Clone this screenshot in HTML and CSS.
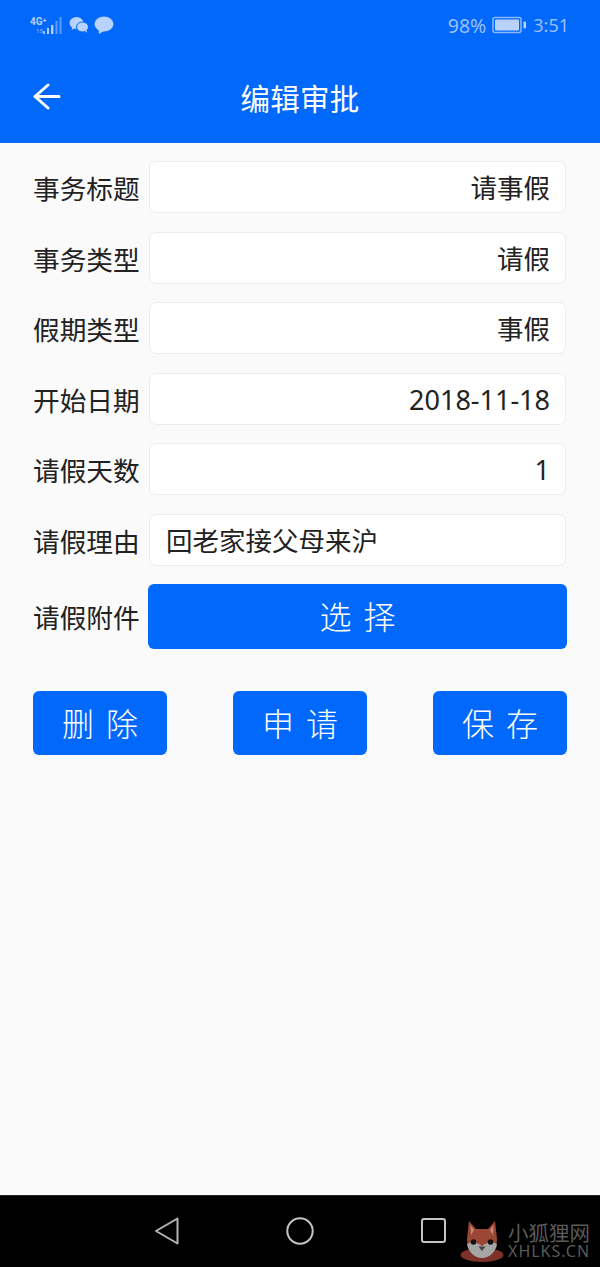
FILE: index.html
```html
<!DOCTYPE html>
<html lang="zh">
<head>
<meta charset="utf-8">
<title>编辑审批</title>
<link rel="stylesheet" href="styles.css">
</head>
<body>
<div class="screen">
  <header class="header">
    <div class="status">
      <div class="status-left">
        <svg class="signal" width="34" height="22" viewBox="0 0 34 22">
          <text x="0" y="10.500" class="net">4G⁺</text>
          <text x="6" y="19" class="net small">15</text>
          <rect x="13" y="17" width="2" height="3" fill="#9dc0fb"/>
          <rect x="17" y="14" width="2" height="6" fill="#b4cffc"/>
          <rect x="21" y="11" width="2.400" height="9" fill="#b4cffc"/>
          <rect x="25.500" y="7" width="2" height="13" fill="#5f9bfa"/>
          <rect x="29.500" y="3" width="2" height="17" fill="#5f9bfa"/>
        </svg>
        <svg width="20" height="18" viewBox="0 0 20 18">
          <ellipse cx="7.500" cy="7" rx="7" ry="6" fill="#b9d2fc"/>
          <path d="M3.500 11l-1 3 3.500-2z" fill="#b9d2fc"/>
          <ellipse cx="13.500" cy="11" rx="6" ry="5" fill="#b9d2fc" stroke="#0068fb" stroke-width="1"/>
          <path d="M16 15l2 2-.5-3z" fill="#b9d2fc"/>
        </svg>
        <svg width="20" height="18" viewBox="0 0 20 18">
          <ellipse cx="10" cy="8" rx="9.500" ry="7.500" fill="#b9d2fc"/>
          <path d="M4.500 13l.5 5 5-3z" fill="#b9d2fc"/>
        </svg>
      </div>
      <div class="status-right">
        <span class="pct">98%</span>
        <svg width="35" height="18" viewBox="0 0 35 18">
          <rect x="1" y="1.500" width="28" height="15" rx="2" fill="none" stroke="#8db6fa" stroke-width="1.500"/>
          <rect x="3" y="3.500" width="24" height="11" rx="1" fill="#b9d2fc"/>
          <rect x="31.500" y="5.500" width="2.500" height="7" rx="1" fill="#b9d2fc"/>
        </svg>
        <span>3:51</span>
      </div>
    </div>
    <div class="titlebar">
      <svg class="back" width="30" height="30" viewBox="0 0 30 30">
        <path d="M2 14.500H26M15 3L2 14.500L15 26" fill="none" stroke="#fff" stroke-width="3" stroke-linecap="round" stroke-linejoin="round"/>
      </svg>
      <h1 class="title">编辑审批</h1>
    </div>
  </header>

  <main class="content">
    <div class="form">
      <div class="row"><span class="label">事务标题</span><div class="field">请事假</div></div>
      <div class="row"><span class="label">事务类型</span><div class="field">请假</div></div>
      <div class="row"><span class="label">假期类型</span><div class="field">事假</div></div>
      <div class="row"><span class="label">开始日期</span><div class="field field-num">2018-11-18</div></div>
      <div class="row"><span class="label">请假天数</span><div class="field field-num">1</div></div>
      <div class="row"><span class="label">请假理由</span><div class="field field-left">回老家接父母来沪</div></div>
      <div class="row row-select"><span class="label">请假附件</span><button class="btn btn-select">选 择</button></div>
    </div>
    <div class="actions">
      <button class="btn btn-action">删 除</button>
      <button class="btn btn-action">申 请</button>
      <button class="btn btn-action">保 存</button>
    </div>
  </main>

  <footer class="navbar">
    <svg class="nav-back" width="26" height="30" viewBox="0 0 26 30">
      <path d="M23.500 2.500V27.500L2 15z" fill="none" stroke="#b5b5b5" stroke-width="2" stroke-linejoin="round"/>
    </svg>
    <svg class="nav-home" width="28" height="28" viewBox="0 0 28 28">
      <circle cx="14" cy="14" r="12.700" fill="none" stroke="#c4c4c4" stroke-width="2"/>
    </svg>
    <svg class="nav-recent" width="25" height="25" viewBox="0 0 25 25">
      <rect x="1" y="1" width="23" height="23" rx="2" fill="none" stroke="#c4c4c4" stroke-width="2"/>
    </svg>
    <div class="watermark">
      <svg width="44" height="42" viewBox="0 0 44 42">
        <ellipse cx="22" cy="35" rx="21.500" ry="7" fill="#7c3226"/>
        <path d="M9 1l7 8h12l7-8 2 18c0 11-7 19-15 19S7 30 7 19z" fill="#9c4636"/>
        <path d="M10.500 5l3.500 5-3 5zM33.500 5l-3.500 5 3 5z" fill="#c98b80"/>
        <path d="M7 24c5-3 10-2 15 2 5-4 10-5 15-2-1 8-8 14-15 14S8 32 7 24z" fill="#a5a5a5"/>
        <circle cx="13.500" cy="22" r="2.800" fill="#111"/>
        <circle cx="30.500" cy="22" r="2.800" fill="#111"/>
        <path d="M18.500 26.500h7l-3.500 4.500z" fill="#444"/>
      </svg>
      <div class="wm-text">
        <span class="wm-cn">小狐狸网</span>
        <span class="wm-en">XHLKS.CN</span>
      </div>
    </div>
  </footer>
</div>
</body>
</html>
```
FILE: styles.css
```css
* { box-sizing: border-box; }
html, body { margin: 0; padding: 0; }
body {
  width: 600px;
  height: 1267px;
  overflow: hidden;
  font-family: "Noto Sans CJK SC", "Noto Sans", sans-serif;
  background: #fafafa;
}
.screen {
  display: flex;
  flex-direction: column;
  height: 1267px;
}
.header {
  height: 143px;
  flex: none;
  background: #0068fb;
  color: #fff;
}
.status {
  height: 50px;
  padding: 14px 31px 0 30px;
  display: flex;
  justify-content: space-between;
  align-items: flex-start;
}
.status-left {
  display: flex;
  align-items: center;
  gap: 5px;
  height: 22px;
}
.net {
  font-family: "Roboto", sans-serif;
  font-size: 10px;
  font-weight: 700;
  fill: #b4cffc;
}
.net.small { font-size: 6px; fill: #6ea3fa; }
.status-right {
  display: flex;
  align-items: center;
  gap: 6px;
  height: 22px;
  font-family: "Noto Sans", sans-serif;
  font-size: 18px;
  color: #9bbffb;
}
.pct { font-size: 19.500px; }
.titlebar {
  position: relative;
  height: 93px;
  display: flex;
  align-items: flex-start;
  justify-content: center;
  padding-top: 25px;
}
.back {
  position: absolute;
  left: 33px;
  top: 32px;
}
.title {
  margin: 0;
  font-size: 29.500px;
  line-height: 44px;
  font-weight: 400;
  letter-spacing: 0.300px;
}
.content {
  flex: 1;
  padding: 18px 33px 0 33px;
  background: #fafafa;
}
.form {
  display: flex;
  flex-direction: column;
  gap: 18.500px;
}
.row {
  display: flex;
  align-items: center;
  gap: 9px;
  padding-right: 1px;
}
.row-select { padding-right: 0; gap: 8px; }
.label {
  flex: none;
  width: 107px;
  padding-top: 2px;
  font-size: 26.700px;
  line-height: 40px;
  color: #222;
  white-space: nowrap;
}
.field {
  flex: 1;
  height: 52px;
  padding: 1px 15px 0 16px;
  background: #fff;
  border: 1px solid #ececec;
  border-radius: 7px;
  font-size: 26.500px;
  line-height: 50px;
  text-align: right;
  color: #222;
  font-family: "Noto Sans", "Noto Sans CJK SC", sans-serif;
}
.field-num { font-size: 27px; }
.field-left { text-align: left; }
.btn {
  display: block;
  border: 0;
  padding: 0 0 2px;
  background: #0068fb;
  color: #fff;
  border-radius: 6px;
  font-family: "Noto Sans CJK SC", sans-serif;
  font-size: 32px;
  font-weight: 300;
  word-spacing: 5px;
  text-align: center;
}
.btn-select {
  flex: 1;
  height: 64.500px;
}
.actions {
  margin-top: 42px;
  display: flex;
  justify-content: space-between;
}
.btn-action {
  width: 134px;
  height: 64.500px;
}
.navbar {
  position: relative;
  flex: none;
  height: 72px;
  background: #000;
  border-top: 1px solid #222;
}
.nav-back { position: absolute; left: 154px; top: 20px; }
.nav-home { position: absolute; left: 286px; top: 21px; }
.nav-recent { position: absolute; left: 420.500px; top: 22px; }
.watermark {
  position: absolute;
  left: 460px;
  top: 24px;
  display: flex;
  align-items: flex-start;
  gap: 4px;
}
.wm-text {
  display: flex;
  flex-direction: column;
  width: 84px;
  color: #5a5a5a;
  line-height: 1;
}
.wm-cn {
  font-size: 20.500px;
  line-height: 21px;
  margin-top: 2px;
  white-space: nowrap;
}
.wm-en {
  font-family: "Noto Sans", sans-serif;
  font-size: 16px;
  line-height: 16px;
  letter-spacing: 1px;
  white-space: nowrap;
}
```
